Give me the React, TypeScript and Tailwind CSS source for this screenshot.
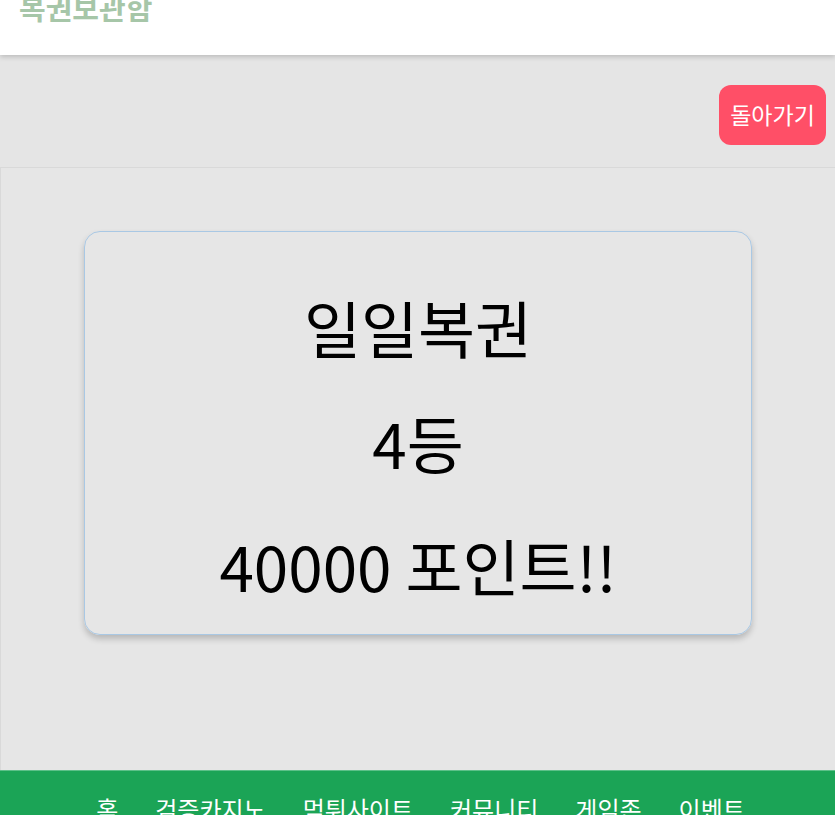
import React from "react";

const font = { fontFamily: '"Noto Sans CJK KR", "Noto Sans", sans-serif' };

export default function App() {
  const nav = ["홈", "검증카지노", "먹튀사이트", "커뮤니티", "게임존", "이벤트"];
  return (
    <div className="w-[835px] h-[815px] overflow-hidden bg-[#e5e5e5] flex flex-col" style={font}>
      <header className="h-[55px] shrink-0 bg-white shadow-[0_2px_5px_rgba(0,0,0,0.18)] relative z-10 overflow-hidden">
        <div className="pl-[19px] -mt-[13px] text-[29px] font-bold leading-[40px] text-[#a6c6a8]">복권보관함</div>
      </header>
      <div className="h-[112px] shrink-0 flex items-center justify-end pr-[9px] pt-[7px]">
        <button className="w-[107px] h-[60px] rounded-[12px] bg-[#ff4f67] text-white text-[23px] leading-none">돌아가기</button>
      </div>
      <main className="flex-1 border-t border-l border-[#d9d9d9] bg-[#e6e6e6] flex justify-center pt-[63px]">
        <div className="w-[668px] h-[404px] rounded-[16px] border border-[#a9c8e4] shadow-[0_4px_6px_rgba(0,0,0,0.2)] flex flex-col items-center text-black text-[62px] leading-none pt-[64px]">
          <div>일일복권</div>
          <div className="mt-[53px]">4등</div>
          <div className="mt-[61px]">40000 포인트!!</div>
        </div>
      </main>
      <footer className="h-[45px] shrink-0 bg-[#1ba456] border-t border-[#5cc088] flex justify-center gap-[37px] pl-[6px] pt-[26px] text-white text-[24px] leading-none">
        {nav.map((n) => (
          <span key={n}>{n}</span>
        ))}
      </footer>
    </div>
  );
}
